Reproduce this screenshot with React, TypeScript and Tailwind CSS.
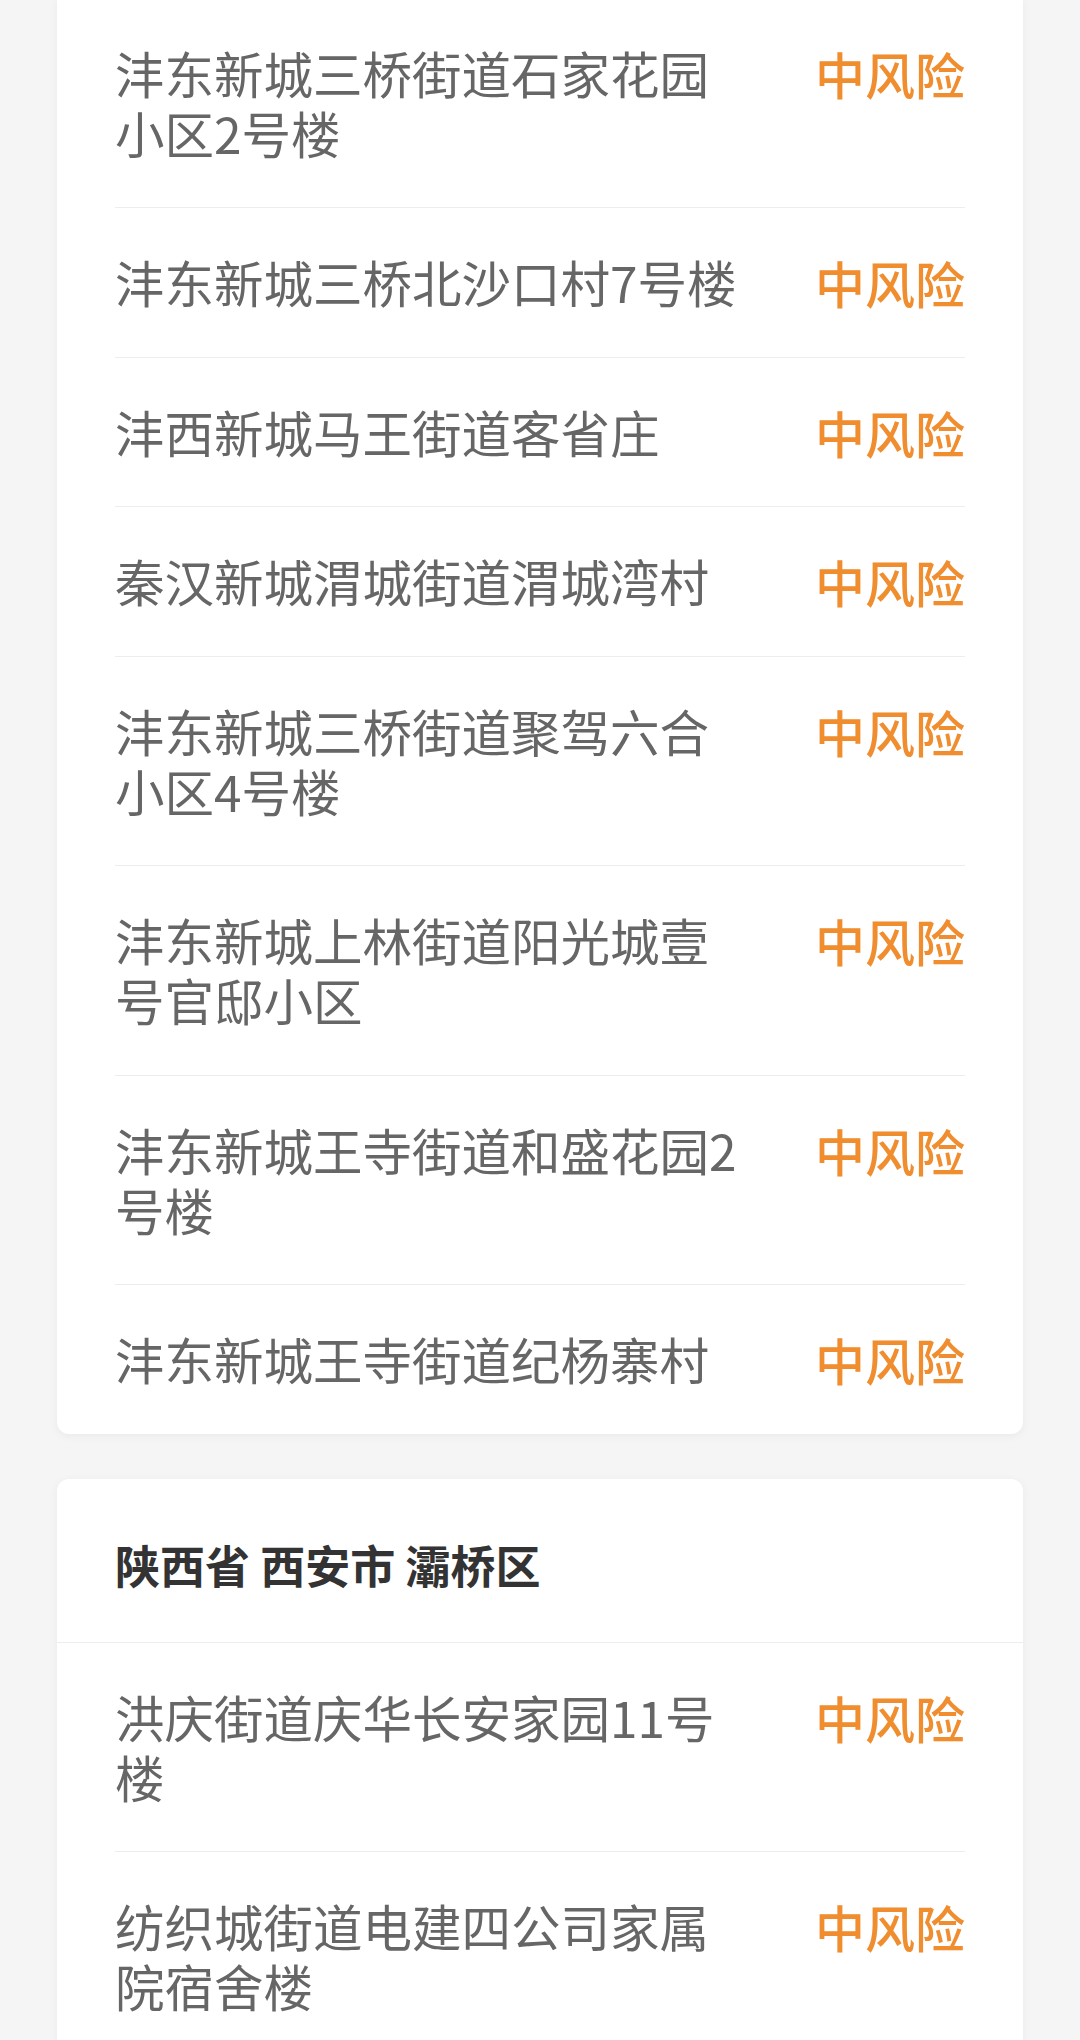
const font = { fontFamily: '"Noto Sans CJK SC", "Noto Sans", sans-serif' };

type Group = { title?: string; places: string[] };

const groups: Group[] = [
  {
    places: [
      "沣东新城三桥街道石家花园小区2号楼",
      "沣东新城三桥北沙口村7号楼",
      "沣西新城马王街道客省庄",
      "秦汉新城渭城街道渭城湾村",
      "沣东新城三桥街道聚驾六合小区4号楼",
      "沣东新城上林街道阳光城壹号官邸小区",
      "沣东新城王寺街道和盛花园2号楼",
      "沣东新城王寺街道纪杨寨村",
    ],
  },
  {
    title: "陕西省 西安市 灞桥区",
    places: [
      "洪庆街道庆华长安家园11号楼",
      "纺织城街道电建四公司家属院宿舍楼",
    ],
  },
];

function RiskRow({ name, last }: { name: string; last: boolean }) {
  return (
    <div className="px-[58px]">
      <div
        className={`flex items-start py-[44.25px] ${last ? "" : "border-b border-[#ededed]"}`}
      >
        <div className="w-[625px] text-[49.5px] leading-[60px] text-[#666666]">{name}</div>
        <div className="ml-auto text-[50px] leading-[60px] font-medium text-[#ef8d2f]">中风险</div>
      </div>
    </div>
  );
}

export default function App() {
  return (
    <div className="min-h-[2040px] h-[2040px] overflow-hidden bg-[#f5f5f5]" style={font}>
      <div className="flex flex-col gap-[45px] px-[57px] -mt-[1.5px]">
        {groups.map((g, i) => (
          <div
            key={i}
            className={`bg-white shadow-[0_2px_10px_rgba(0,0,0,0.05)] ${g.title ? "rounded-[12px]" : "rounded-b-[12px]"}`}
          >
            {g.title && (
              <div className="border-b border-[#ededed] px-[58px] pt-[54px] pb-[45px] text-[45px] leading-[64px] font-bold text-[#333333]">
                {g.title}
              </div>
            )}
            {g.places.map((p, j) => (
              <RiskRow key={p} name={p} last={j === g.places.length - 1} />
            ))}
          </div>
        ))}
      </div>
    </div>
  );
}
